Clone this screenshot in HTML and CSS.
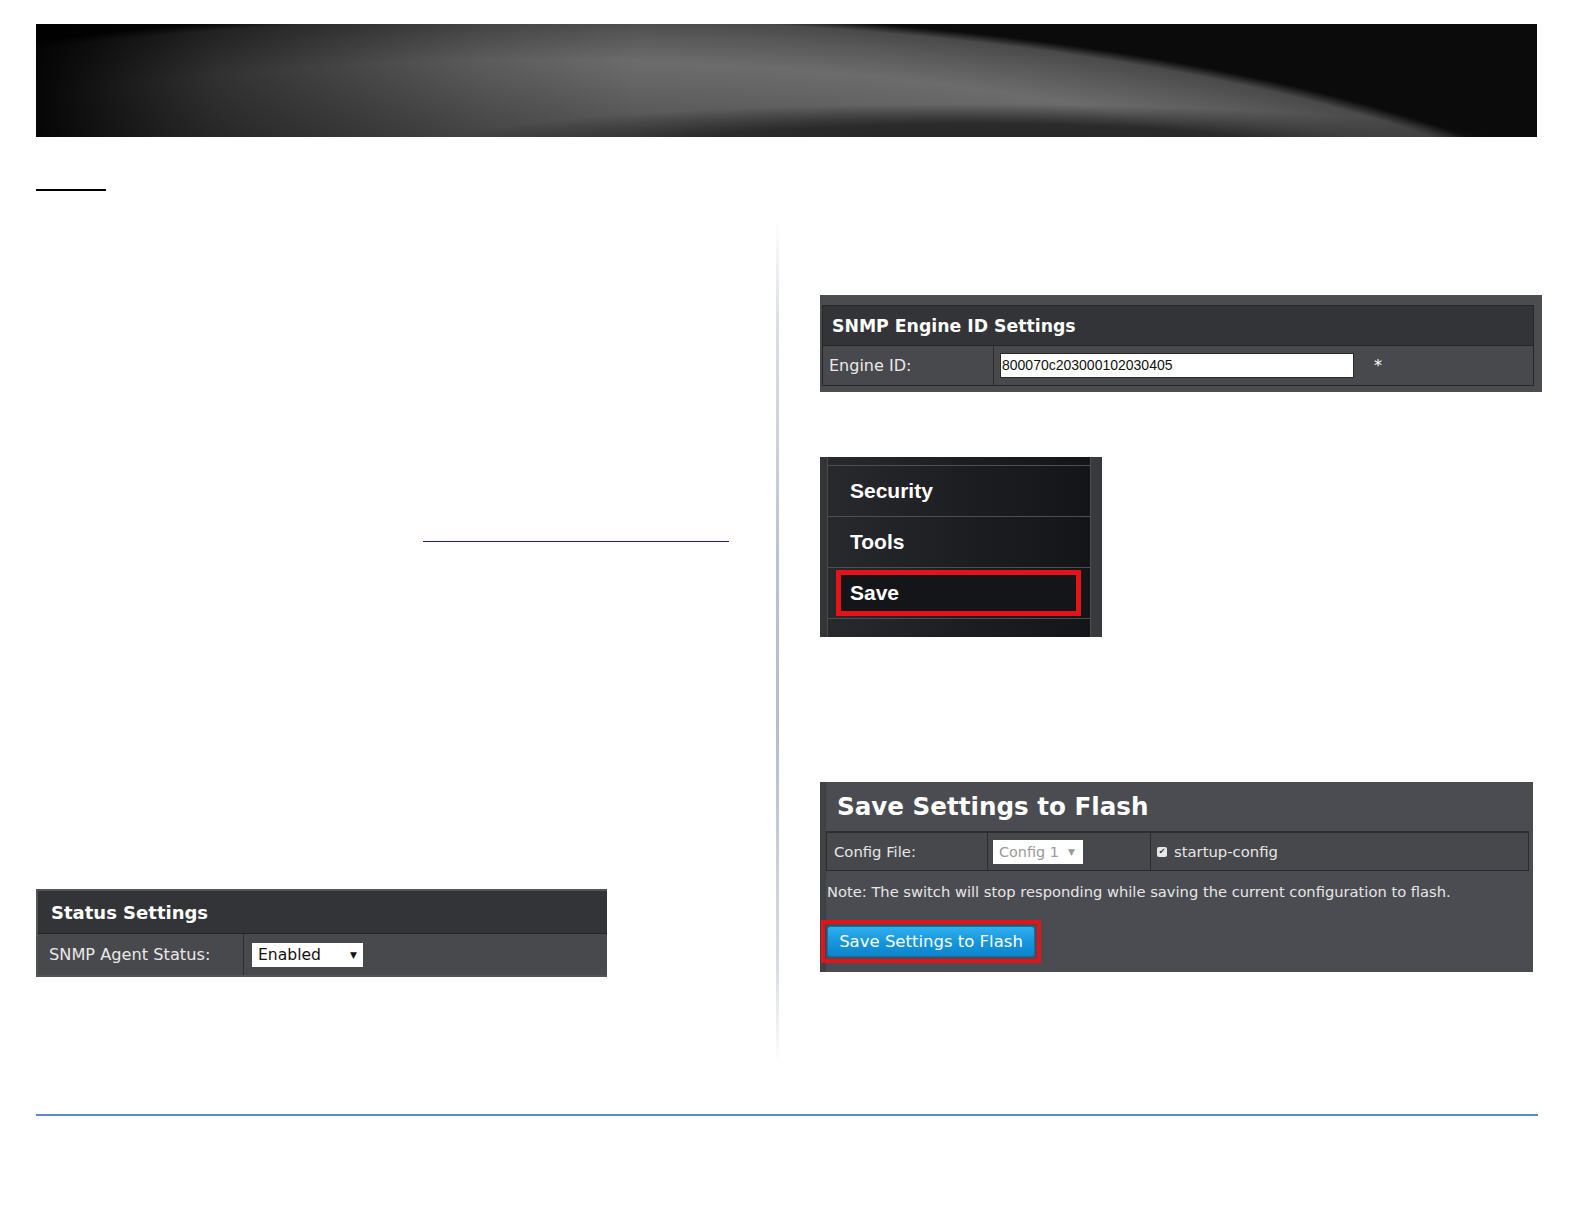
FILE: index.html
```html
<!DOCTYPE html>
<html lang="en">
<head>
    <meta charset="UTF-8">
    <meta name="viewport" content="width=device-width, initial-scale=1.0">
    <title>SNMP Settings</title>
    <link rel="stylesheet" href="styles.css">
</head>
<body>
    <div class="page">
        <!-- Header banner -->
        <div class="banner"></div>
        <div class="title-rule"></div>

        <div class="columns">
            <!-- Left column -->
            <div class="col-left">
                <div class="link-line"></div>

                <div class="panel status-panel">
                    <div class="panel-head">Status Settings</div>
                    <div class="panel-row">
                        <div class="cell label-cell">SNMP Agent Status:</div>
                        <div class="cell">
                            <div class="select select-status">
                                <span>Enabled</span>
                                <span class="arrow">&#9660;</span>
                            </div>
                        </div>
                    </div>
                </div>
            </div>

            <div class="divider"></div>

            <!-- Right column -->
            <div class="col-right">
                <div class="panel engine-panel">
                    <div class="engine-inner">
                        <div class="panel-head engine-head">SNMP Engine ID Settings</div>
                        <div class="panel-row engine-row">
                            <div class="cell label-cell engine-label">Engine ID:</div>
                            <div class="cell">
                                <div class="text-input">800070c203000102030405</div>
                                <span class="required">*</span>
                            </div>
                        </div>
                    </div>
                </div>

                <div class="menu">
                    <div class="menu-edge-left"></div>
                    <div class="menu-list">
                        <div class="menu-stub"></div>
                        <div class="menu-item">Security</div>
                        <div class="menu-item">Tools</div>
                        <div class="menu-item active"><div class="highlight">Save</div></div>
                        <div class="menu-rest"></div>
                    </div>
                    <div class="menu-edge-right"></div>
                </div>

                <div class="flash-panel">
                    <div class="flash-title">Save Settings to Flash</div>
                    <div class="flash-table">
                        <div class="flash-cell flash-label">Config File:</div>
                        <div class="flash-cell">
                            <div class="select select-config">
                                <span>Config 1</span>
                                <span class="arrow">&#9660;</span>
                            </div>
                        </div>
                        <div class="flash-cell flash-check">
                            <span class="checkbox">&#10004;</span>
                            <span>startup-config</span>
                        </div>
                    </div>
                    <p class="flash-note">Note: The switch will stop responding while saving the current configuration to flash.</p>
                    <div class="button-mark">
                        <button class="flash-button">Save Settings to Flash</button>
                    </div>
                </div>
            </div>
        </div>

        <div class="footer-rule"></div>
    </div>
</body>
</html>
```

FILE: styles.css
```css
body {
    margin: 0;
    padding: 0;
    background-color: #ffffff;
    font-family: "DejaVu Sans", Verdana, sans-serif;
    color: #e0e0e0;
}

.page {
    padding: 24px 0 0 36px;
}

/* Banner */
.banner {
    width: 1501px;
    height: 113px;
    background-color: #0b0b0b;
    background-image:
        linear-gradient(90deg, rgba(0, 0, 0, 0.95) 0%, rgba(0, 0, 0, 0.55) 12%, rgba(0, 0, 0, 0.15) 30%, transparent 40%),
        radial-gradient(540px 44px at 940px 124px, #262626 0%, #2b2b2b 55%, rgba(44, 44, 44, 0) 100%),
        radial-gradient(1162px 314px at 500px 300px, #404040 0%, #505050 60%, #666666 78%, #6c6c6c 84%, #595959 92%, #4a4a4a 97.4%, #181818 99.4%, rgba(12, 12, 12, 0) 100%);
}

.title-rule {
    width: 70px;
    height: 2px;
    margin-top: 52px;
    background-color: #000;
}

/* Columns */
.columns {
    display: grid;
    grid-template-columns: 740px 4px 1fr;
    margin-top: 29px;
    min-height: 845px;
}

.col-left {
    display: flex;
    flex-direction: column;
}

.link-line {
    width: 306px;
    height: 1px;
    margin: 321px 0 0 387px;
    background-color: #1c1ca6;
}

.divider {
    width: 3px;
    background: linear-gradient(180deg, rgba(220, 222, 235, 0) 0%, #dcdfe9 12%, #bcc1d8 40%, #b6bbd4 60%, #d8dbe6 88%, rgba(220, 222, 235, 0) 100%);
}

.col-right {
    display: flex;
    flex-direction: column;
    align-items: flex-start;
    padding-left: 40px;
}

/* Shared panel parts */
.panel-head {
    background-color: #333438;
    color: #fff;
    font-weight: bold;
    display: flex;
    align-items: center;
}

.panel-row {
    display: flex;
    background-color: #48494d;
}

.cell {
    display: flex;
    align-items: center;
}

.label-cell {
    border-right: 1px solid #2c2d30;
    color: #e8e8e8;
}

.select {
    display: flex;
    align-items: center;
    justify-content: space-between;
    background-color: #fff;
    box-sizing: border-box;
}

.select .arrow {
    font-size: 9px;
}

/* Status Settings */
.status-panel {
    width: 571px;
    height: 88px;
    margin-top: 347px;
    box-sizing: border-box;
    border: 2px solid #535458;
    border-right: none;
    background-color: #48494d;
}

.status-panel .panel-head {
    height: 43px;
    box-sizing: border-box;
    border-bottom: 1px solid #222326;
    padding-left: 13px;
    font-size: 18px;
}

.status-panel .panel-row {
    height: 41px;
}

.status-panel .label-cell {
    width: 206px;
    padding-left: 11px;
    box-sizing: border-box;
    font-size: 16.2px;
}

.select-status {
    width: 111px;
    height: 24px;
    margin-left: 8px;
    padding: 0 6px;
    color: #111;
    font-size: 15.6px;
}

/* SNMP Engine ID */
.engine-panel {
    width: 722px;
    height: 97px;
    box-sizing: border-box;
    margin-top: 75px;
    padding: 10px 8px 6px 2px;
    background-color: #4b4c50;
}

.engine-inner {
    border: 1px solid #25262a;
}

.engine-head {
    height: 39px;
    padding-left: 9px;
    font-size: 17.3px;
    border-bottom: 1px solid #25262a;
}

.engine-row {
    height: 39px;
}

.engine-label {
    width: 171px;
    box-sizing: border-box;
    padding-left: 6px;
    font-size: 16px;
}

.text-input {
    width: 354px;
    height: 25px;
    box-sizing: border-box;
    margin-left: 6px;
    padding-left: 1px;
    border: 1px solid #2a2a2a;
    background-color: #fff;
    color: #111;
    font-family: "Liberation Sans", Arial, sans-serif;
    font-size: 14px;
    line-height: 23px;
}

.required {
    margin-left: 20px;
    color: #fff;
    font-size: 16px;
}

/* Menu */
.menu {
    display: flex;
    width: 282px;
    height: 180px;
    margin-top: 65px;
    background-color: #1b1c1f;
}

.menu-edge-left {
    width: 7px;
    background-color: #333437;
    border-right: 1px solid #4a4b4e;
}

.menu-edge-right {
    width: 11px;
    background-color: #393a3e;
    border-left: 1px solid #4c4d51;
}

.menu-list {
    flex: 1;
    display: flex;
    flex-direction: column;
    background: linear-gradient(90deg, #28292c 0%, #1c1d20 55%, #141518 100%);
}

.menu-stub {
    height: 8px;
    border-bottom: 1px solid #4e4f53;
}

.menu-item {
    height: 50px;
    display: flex;
    align-items: center;
    padding-left: 22px;
    border-bottom: 1px solid #4e4f53;
    color: #fff;
    font-family: "Liberation Sans", Arial, sans-serif;
    font-weight: bold;
    font-size: 21px;
}

.menu-item.active {
    padding-left: 0;
}

.highlight {
    flex: 1;
    height: 46px;
    box-sizing: border-box;
    display: flex;
    align-items: center;
    margin: 0 9px 0 8px;
    padding-left: 9px;
    border: 5px solid #e3121b;
    background-color: #141518;
}

.menu-rest {
    flex: 1;
}

/* Save Settings to Flash */
.flash-panel {
    width: 713px;
    height: 190px;
    box-sizing: border-box;
    margin-top: 145px;
    padding: 0 4px 0 6px;
    background-color: #4b4c51;
    box-shadow: inset 6px 0 0 #404145;
    color: #e6e6e6;
}

.flash-title {
    height: 49px;
    display: flex;
    align-items: center;
    padding-left: 11px;
    color: #fff;
    font-weight: bold;
    font-size: 24.6px;
    border-bottom: 2px solid #2d2e31;
}

.flash-table {
    display: grid;
    grid-template-columns: 161px 163px 1fr;
    height: 37px;
    border: 1px solid #2a2b2e;
    border-top: none;
    background-color: #47484c;
}

.flash-cell {
    display: flex;
    align-items: center;
    border-right: 1px solid #2a2b2e;
    font-size: 14.8px;
}

.flash-cell:last-child {
    border-right: none;
}

.flash-label {
    padding-left: 7px;
}

.select-config {
    width: 90px;
    height: 24px;
    margin-left: 5px;
    padding: 0 8px 0 6px;
    color: #9a9a9a;
    font-size: 14.4px;
}

.flash-check {
    padding-left: 6px;
    gap: 7px;
}

.checkbox {
    width: 10px;
    height: 10px;
    border-radius: 2px;
    background-color: #e8e8e8;
    color: #333;
    font-size: 8px;
    line-height: 10px;
    text-align: center;
}

.flash-note {
    margin: 11px 0 0 1px;
    line-height: 20px;
    font-size: 14.7px;
}

.button-mark {
    display: inline-block;
    margin: 18px 0 0 -5px;
    padding: 2px;
    border: 4px solid #e3121b;
}

.flash-button {
    display: block;
    width: 208px;
    height: 31px;
    padding: 0;
    border: 1px solid #0d6fae;
    border-radius: 3px;
    background: linear-gradient(180deg, #2fb0ee 0%, #1796dc 50%, #0b84cd 100%);
    color: #fff;
    font-family: "DejaVu Sans", Verdana, sans-serif;
    font-size: 16.5px;
    cursor: pointer;
}

/* Footer */
.footer-rule {
    width: 1502px;
    height: 2px;
    margin-top: 49px;
    background-color: #5a8ac6;
}
```
